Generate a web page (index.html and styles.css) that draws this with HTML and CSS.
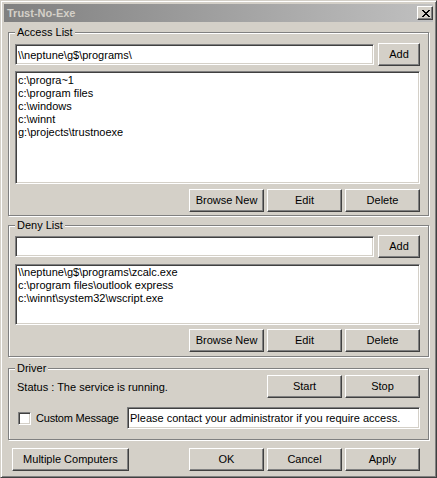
FILE: index.html
```html
<!DOCTYPE html>
<html>
<head>
<meta charset="utf-8">
<title>Trust-No-Exe</title>
<link rel="stylesheet" href="styles.css">
</head>
<body>
<div class="window">
  <div class="titlebar">
    <span class="title">Trust-No-Exe</span>
    <span class="btn close">
      <svg width="8" height="7" viewBox="0 0 8 7" shape-rendering="crispEdges"><path fill="#000" d="M0 0h2v1h-2zM6 0h2v1h-2zM1 1h2v1h-2zM5 1h2v1h-2zM2 2h4v1h-4zM3 3h2v1h-2zM2 4h4v1h-4zM1 5h2v1h-2zM5 5h2v1h-2zM0 6h2v1h-2zM6 6h2v1h-2z"/></svg>
    </span>
  </div>
  <div class="client">
    <div class="group group-access">
      <span class="group-label">Access List</span>
      <div class="row-add">
        <input class="field sunken" type="text" value="\\neptune\g$\programs\">
        <button class="btn btn-add">Add</button>
      </div>
      <div class="listbox sunken list-access">
        <div>c:\progra~1</div>
        <div>c:\program files</div>
        <div>c:\windows</div>
        <div>c:\winnt</div>
        <div>g:\projects\trustnoexe</div>
      </div>
      <div class="row-buttons">
        <button class="btn btn-std">Browse New</button>
        <button class="btn btn-std">Edit</button>
        <button class="btn btn-std">Delete</button>
      </div>
    </div>

    <div class="group group-deny">
      <span class="group-label">Deny List</span>
      <div class="row-add">
        <input class="field sunken" type="text" value="">
        <button class="btn btn-add">Add</button>
      </div>
      <div class="listbox sunken list-deny">
        <div>\\neptune\g$\programs\zcalc.exe</div>
        <div>c:\program files\outlook express</div>
        <div>c:\winnt\system32\wscript.exe</div>
      </div>
      <div class="row-buttons row-buttons-deny">
        <button class="btn btn-std">Browse New</button>
        <button class="btn btn-std">Edit</button>
        <button class="btn btn-std">Delete</button>
      </div>
    </div>

    <div class="group group-driver">
      <span class="group-label">Driver</span>
      <div class="row-status">
        <span class="status">Status : The service is running.</span>
        <div class="btn-pair">
          <button class="btn btn-std">Start</button>
          <button class="btn btn-std">Stop</button>
        </div>
      </div>
      <div class="row-message">
        <span class="checkbox sunken"></span>
        <span class="check-label">Custom Message</span>
        <input class="field sunken msg-field" type="text" value="Please contact your administrator if you require access.">
      </div>
    </div>

    <div class="row-bottom">
      <button class="btn btn-multi">Multiple Computers</button>
      <div class="btn-trio">
        <button class="btn btn-std">OK</button>
        <button class="btn btn-std">Cancel</button>
        <button class="btn btn-std">Apply</button>
      </div>
    </div>
  </div>
</div>
</body>
</html>
```

FILE: styles.css
```css
* { box-sizing: border-box; }
html, body { margin: 0; padding: 0; }
body {
  width: 437px;
  height: 478px;
  overflow: hidden;
  background: #d4d0c8;
  font-family: "Liberation Sans", Arial, sans-serif;
  font-size: 11px;
  color: #000;
}
.window {
  width: 437px;
  height: 478px;
  background: #d4d0c8;
  border: 1px solid;
  border-color: #d4d0c8 #404040 #404040 #d4d0c8;
  box-shadow: inset 1px 1px #fff, inset -1px -1px #808080;
  padding: 3px;
  display: flex;
  flex-direction: column;
}
.titlebar {
  height: 18px;
  flex: none;
  display: flex;
  align-items: center;
  justify-content: space-between;
  background: linear-gradient(to right, #808080, #c0c0c0);
  padding: 0 0 0 3px;
}
.title {
  font-weight: bold;
  color: #d4d0c8;
  font-size: 11px;
  line-height: 13px;
}
.btn {
  font: inherit;
  color: #000;
  background: #d4d0c8;
  border: 1px solid;
  border-color: #fff #404040 #404040 #fff;
  box-shadow: inset -1px -1px #808080, inset 1px 1px #d4d0c8;
  padding: 0;
  height: 23px;
  line-height: 13px;
}
.close {
  width: 16px;
  height: 14px;
  display: flex;
  align-items: center;
  justify-content: center;
  padding-left: 1px;
}
.close svg { display: block; }
.client {
  flex: 1;
  display: flex;
  flex-direction: column;
  padding: 0 4px;
}
.sunken {
  background: #fff;
  border: 1px solid;
  border-color: #808080 #fff #fff #808080;
  box-shadow: inset 1px 1px #404040, inset -1px -1px #d4d0c8;
}
.group {
  position: relative;
  border: 1px solid #808080;
  box-shadow: inset 1px 1px #fff, 1px 1px #fff;
  padding: 0 8px 0 6px;
  display: flex;
  flex-direction: column;
}
.group-label {
  position: absolute;
  top: -7px;
  left: 6px;
  padding: 0 2px;
  background: #d4d0c8;
  line-height: 13px;
}
.group-access {
  margin-top: 10px;
  height: 184px;
  padding-top: 10px;
}
.group-deny {
  margin-top: 9px;
  height: 132px;
  padding-top: 9px;
}
.group-driver {
  margin-top: 11px;
  height: 72px;
  padding-top: 6px;
}
.row-add {
  display: flex;
  align-items: center;
  gap: 4px;
  height: 23px;
}
.field {
  font: inherit;
  color: #000;
  height: 21px;
  padding: 0 2px;
  outline: none;
  margin: 0;
}
.row-add .field { width: 359px; }
.btn-add { width: 42px; }
.listbox {
  line-height: 13px;
  padding: 1px 0 0 2px;
}
.list-access {
  margin-top: 5px;
  height: 113px;
  padding-top: 2px;
}
.list-deny {
  margin-top: 6px;
  height: 61px;
}
.row-buttons {
  display: flex;
  justify-content: flex-end;
  gap: 3px;
  margin-top: 5px;
}
.row-buttons-deny { margin-top: 4px; }
.btn-std { width: 75px; }
.row-status {
  display: flex;
  align-items: center;
  justify-content: space-between;
  height: 23px;
}
.status { padding-left: 2px; }
.btn-pair, .btn-trio {
  display: flex;
  gap: 3px;
}
.row-message {
  display: flex;
  align-items: center;
  margin-top: 9px;
  height: 22px;
}
.checkbox {
  width: 13px;
  height: 13px;
  margin-left: 3px;
  flex: none;
}
.check-label { margin-left: 5px; letter-spacing: -0.2px; }
.msg-field {
  width: 293px;
  height: 22px;
  margin-left: auto;
}
.row-bottom {
  display: flex;
  justify-content: space-between;
  margin-top: 8px;
  padding: 0 9px 0 4px;
}
.btn-multi { width: 117px; }
```
